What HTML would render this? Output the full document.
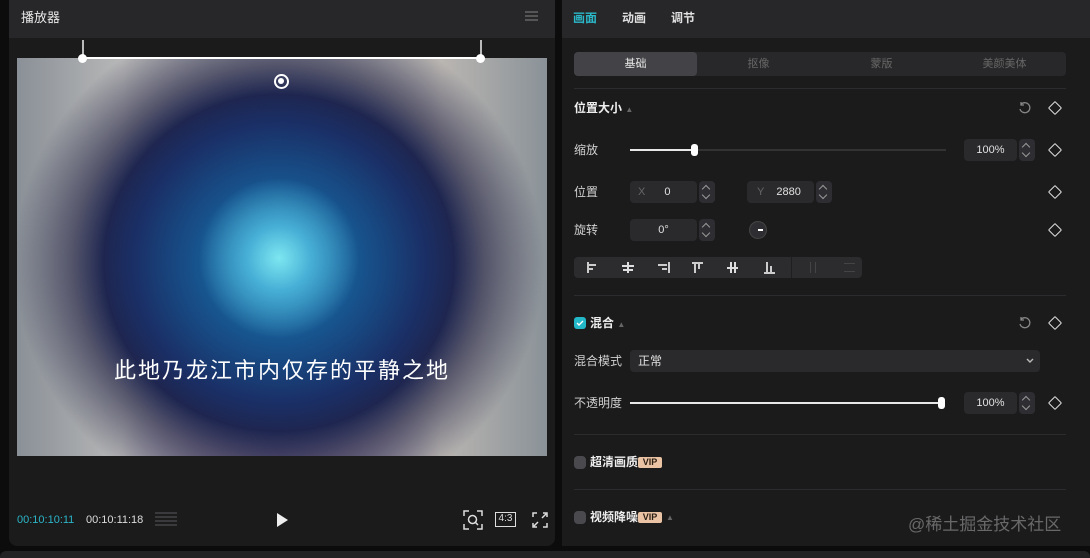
<!DOCTYPE html>
<html><head><meta charset="utf-8"><style>
*{margin:0;padding:0;box-sizing:border-box}
body{width:1090px;height:558px;background:#0c0c0d;position:relative;overflow:hidden;font-family:"Liberation Sans","Noto Sans CJK SC",sans-serif;color:#d8d8d8;font-size:12px;line-height:16px}
.a{position:absolute}
.panel{background:#1b1b1c}
.hdr{background:#27272a}
.lbl{font-size:12px;color:#d0d0d0}
.inp{background:#2a2a2d;border-radius:4px;color:#e0e0e0;font-size:11px}
.spin{background:#2e2e32;border-radius:4px}
.spin:before,.spin:after{content:"";position:absolute;left:4px;width:5px;height:5px;border-left:1.5px solid #999;border-top:1.5px solid #999}
.spin:before{top:5px;transform:rotate(45deg)}
.spin:after{bottom:5px;transform:rotate(225deg)}
.dia{width:10px;height:10px;border:1.5px solid #ddd;transform:rotate(45deg);border-radius:1px}
.sep{height:1px;background:#2c2c2f}
.vip{background:#e9c3a3;color:#2a1d12;font-size:9px;font-weight:bold;border-radius:2px;width:24px;height:11px;line-height:11px;text-align:center;font-family:"Liberation Sans",sans-serif}
.bar{background:#e8e8e8}
</style></head><body>
<div class="a panel" style="left:9px;top:0;width:546px;height:546px;border-radius:0 0 8px 8px"></div>
<div class="a hdr" style="left:9px;top:0;width:546px;height:38px"></div>
<div class="a" style="left:21px;top:10px;font-size:13px;color:#e8e8e8">播放器</div>
<div class="a" style="left:525px;top:11px;width:13px;height:1.5px;background:#555;box-shadow:0 4px 0 #555,0 8px 0 #555"></div>
<div class="a" style="left:17px;top:58px;width:530px;height:398px;overflow:hidden;background:
radial-gradient(ellipse 80px 80px at 262px 200px,#7de6f0 0%,rgba(80,190,225,.8) 40%,rgba(40,120,180,0) 100%),
radial-gradient(ellipse 265px 255px at 262px 205px,#2a86b8 0%,#17558f 30%,#1a2f66 55%,#1e2650 66%,rgba(50,50,80,.7) 78%,rgba(140,140,150,0) 100%),
radial-gradient(ellipse 160px 90px at 262px 395px,rgba(110,80,140,.7),rgba(110,80,140,0)),
linear-gradient(90deg,#8a9097 0%,#b8b8b8 20%,#a8abb0 50%,#bab6b2 80%,#8a9298 100%)">
<div class="a" style="left:0;width:530px;top:296px;line-height:30px;text-align:center;font-size:22px;color:#fff;letter-spacing:2px;font-family:'Noto Sans CJK SC',sans-serif">此地乃龙江市内仅存的平静之地</div>
<div class="a" style="left:257px;top:16px;width:15px;height:15px;border-radius:50%;border:2.5px solid #fff"><div class="a" style="left:2px;top:2px;width:6px;height:6px;border-radius:50%;background:#fff"></div></div>
</div>
<div class="a" style="left:82px;top:57px;width:398px;height:1.5px;background:#fff"></div>
<div class="a" style="left:82px;top:40px;width:1.5px;height:18px;background:#bbb"></div>
<div class="a" style="left:480px;top:40px;width:1.5px;height:18px;background:#bbb"></div>
<div class="a" style="left:78px;top:54px;width:9px;height:9px;border-radius:50%;background:#fff"></div>
<div class="a" style="left:476px;top:54px;width:9px;height:9px;border-radius:50%;background:#fff"></div>
<div class="a" style="left:17px;top:512px;font-size:11px;color:#2bb5c7">00:10:10:11</div>
<div class="a" style="left:86px;top:512px;font-size:11px;color:#ddd">00:10:11:18</div>
<div class="a" style="left:155px;top:512px;width:22px;height:16px;background:repeating-linear-gradient(#3a3a3c 0 2px,transparent 2px 4px)"></div>
<div class="a" style="left:277px;top:513px;width:0;height:0;border-left:11px solid #eee;border-top:7px solid transparent;border-bottom:7px solid transparent"></div>
<svg class="a" style="left:463px;top:510px" width="20" height="20" viewBox="0 0 20 20" fill="none" stroke="#ddd" stroke-width="1.5"><path d="M1 6V1h5M14 1h5v5M19 14v5h-5M6 19H1v-5"/><circle cx="9.5" cy="9.5" r="4"/><path d="M12.5 12.5l2.5 2.5"/></svg>
<div class="a" style="left:495px;top:512px;width:21px;height:15px;border:1.5px solid #ddd;font-size:10px;color:#ddd;text-align:center;line-height:12px">4:3</div>
<svg class="a" style="left:532px;top:512px" width="16" height="16" viewBox="0 0 16 16" fill="none" stroke="#ddd" stroke-width="1.5"><path d="M1 5V1h4M11 1h4v4M15 11v4h-4M5 15H1v-4M2 14l4-4M14 2l-4 4"/></svg>

<div class="a panel" style="left:562px;top:0;width:528px;height:546px"></div>
<div class="a hdr" style="left:562px;top:0;width:528px;height:38px"></div>
<div class="a" style="left:573px;top:10px;font-size:12px;color:#2bb8c8;font-weight:bold">画面</div>
<div class="a" style="left:622px;top:10px;font-size:12px;color:#e0e0e0;font-weight:bold">动画</div>
<div class="a" style="left:671px;top:10px;font-size:12px;color:#e0e0e0;font-weight:bold">调节</div>
<div class="a" style="left:574px;top:52px;width:492px;height:24px;background:#28282a;border-radius:4px"></div>
<div class="a" style="left:574px;top:52px;width:123px;height:24px;background:#434347;border-radius:4px;text-align:center;line-height:24px;color:#e6e6e6;font-size:11px">基础</div>
<div class="a" style="left:697px;top:52px;width:123px;line-height:24px;text-align:center;color:#666;font-size:11px">抠像</div>
<div class="a" style="left:820px;top:52px;width:123px;line-height:24px;text-align:center;color:#666;font-size:11px">蒙版</div>
<div class="a" style="left:943px;top:52px;width:123px;line-height:24px;text-align:center;color:#666;font-size:11px">美颜美体</div>
<div class="a sep" style="left:574px;top:88px;width:492px"></div>

<div class="a" style="left:574px;top:100px;font-size:12px;color:#eee;font-weight:bold">位置大小 <span style="color:#666;font-size:8px">▲</span></div>
<svg class="a" style="left:1018px;top:101px" width="14" height="14" viewBox="0 0 14 14" fill="none" stroke="#888" stroke-width="1.3"><path d="M3 3.5A5 5 0 1 1 2 8"/><path d="M3 1v3h3"/></svg>
<div class="a dia" style="left:1050px;top:103px"></div>

<div class="a lbl" style="left:574px;top:142px">缩放</div>
<div class="a" style="left:630px;top:149px;width:316px;height:2px;background:#333"></div>
<div class="a bar" style="left:630px;top:149px;width:65px;height:2px"></div>
<div class="a" style="left:691px;top:144px;width:7px;height:12px;border-radius:3px;background:#fff"></div>
<div class="a inp" style="left:964px;top:139px;width:53px;height:22px;text-align:center;line-height:22px">100%</div>
<div class="a spin" style="left:1019px;top:139px;width:16px;height:22px"></div>
<div class="a dia" style="left:1050px;top:145px"></div>

<div class="a lbl" style="left:574px;top:184px">位置</div>
<div class="a inp" style="left:630px;top:181px;width:67px;height:22px;line-height:22px"><span style="color:#666;margin-left:8px">X</span><span style="margin-left:19px">0</span></div>
<div class="a spin" style="left:699px;top:181px;width:16px;height:22px"></div>
<div class="a inp" style="left:747px;top:181px;width:67px;height:22px;line-height:22px"><span style="color:#666;margin-left:10px">Y</span><span style="margin-left:12px">2880</span></div>
<div class="a spin" style="left:816px;top:181px;width:16px;height:22px"></div>
<div class="a dia" style="left:1050px;top:187px"></div>

<div class="a lbl" style="left:574px;top:222px">旋转</div>
<div class="a inp" style="left:630px;top:219px;width:67px;height:22px;line-height:22px;text-align:center">0°</div>
<div class="a spin" style="left:699px;top:219px;width:16px;height:22px"></div>
<div class="a" style="left:749px;top:221px;width:18px;height:18px;border-radius:50%;background:#2e2e32;border:1px solid #444"><div class="a" style="left:8px;top:7px;width:5px;height:2px;background:#fff"></div></div>
<div class="a dia" style="left:1050px;top:225px"></div>

<div class="a" style="left:574px;top:257px;width:288px;height:21px;background:#2c2c2f;border-radius:4px"></div>
<div class="a" style="left:791px;top:257px;width:1px;height:21px;background:#1f1f21"></div>
<div class="a" style="left:587px;top:262px;width:1.5px;height:11px;background:#ccc"></div><div class="a" style="left:589px;top:264px;width:7px;height:1.5px;background:#ccc"></div><div class="a" style="left:589px;top:268px;width:4px;height:1.5px;background:#ccc"></div>
<div class="a" style="left:627px;top:262px;width:1.5px;height:11px;background:#ddd"></div><div class="a" style="left:622px;top:265px;width:12px;height:1.5px;background:#ddd"></div><div class="a" style="left:623px;top:269px;width:10px;height:1.5px;background:#ddd"></div>
<div class="a" style="left:668px;top:262px;width:1.5px;height:11px;background:#ccc"></div><div class="a" style="left:658px;top:264px;width:9px;height:1.5px;background:#ccc"></div><div class="a" style="left:662px;top:268px;width:5px;height:1.5px;background:#ccc"></div>
<div class="a" style="left:692px;top:262px;width:11px;height:1.5px;background:#ccc"></div><div class="a" style="left:694px;top:264px;width:1.5px;height:9px;background:#ccc"></div><div class="a" style="left:698px;top:264px;width:1.5px;height:5px;background:#ccc"></div>
<div class="a" style="left:727px;top:267px;width:11px;height:1.5px;background:#ddd"></div><div class="a" style="left:730px;top:262px;width:1.5px;height:11px;background:#ddd"></div><div class="a" style="left:734px;top:262px;width:1.5px;height:11px;background:#ddd"></div>
<div class="a" style="left:764px;top:272px;width:11px;height:1.5px;background:#ccc"></div><div class="a" style="left:766px;top:262px;width:1.5px;height:10px;background:#ccc"></div><div class="a" style="left:770px;top:266px;width:1.5px;height:6px;background:#ccc"></div>
<div class="a" style="left:810px;top:262px;width:6px;height:11px;border-left:1.5px solid #444;border-right:1.5px solid #444"></div>
<div class="a" style="left:844px;top:263px;width:11px;height:9px;border-top:1.5px solid #444;border-bottom:1.5px solid #444"></div>
<div class="a sep" style="left:574px;top:295px;width:492px"></div>

<div class="a" style="left:574px;top:317px;width:12px;height:12px;border-radius:3px;background:#22b8c8"><svg class="a" style="left:2px;top:2px" width="8" height="8" viewBox="0 0 8 8" fill="none" stroke="#fff" stroke-width="1.4"><path d="M1 4l2 2 4-4"/></svg></div>
<div class="a" style="left:590px;top:315px;font-size:12px;color:#eee;font-weight:bold">混合 <span style="color:#666;font-size:8px">▲</span></div>
<svg class="a" style="left:1018px;top:316px" width="14" height="14" viewBox="0 0 14 14" fill="none" stroke="#888" stroke-width="1.3"><path d="M3 3.5A5 5 0 1 1 2 8"/><path d="M3 1v3h3"/></svg>
<div class="a dia" style="left:1050px;top:318px"></div>

<div class="a lbl" style="left:574px;top:353px">混合模式</div>
<div class="a inp" style="left:630px;top:350px;width:410px;height:22px;line-height:22px;padding-left:8px;font-size:12px">正常</div>
<svg class="a" style="left:1026px;top:358px" width="8" height="6" viewBox="0 0 8 6" fill="none" stroke="#bbb" stroke-width="1.4"><path d="M1 1l3 3 3-3"/></svg>

<div class="a lbl" style="left:574px;top:395px">不透明度</div>
<div class="a bar" style="left:630px;top:402px;width:312px;height:2px"></div>
<div class="a" style="left:938px;top:397px;width:7px;height:12px;border-radius:3px;background:#fff"></div>
<div class="a inp" style="left:964px;top:392px;width:53px;height:22px;text-align:center;line-height:22px">100%</div>
<div class="a spin" style="left:1019px;top:392px;width:16px;height:22px"></div>
<div class="a dia" style="left:1050px;top:398px"></div>
<div class="a sep" style="left:574px;top:434px;width:492px"></div>

<div class="a" style="left:574px;top:456px;width:12px;height:13px;border-radius:4px;background:#4a4a4e"></div>
<div class="a" style="left:590px;top:454px;font-size:12px;color:#eee;font-weight:bold">超清画质</div>
<div class="a vip" style="left:638px;top:457px">VIP</div>
<div class="a sep" style="left:574px;top:489px;width:492px"></div>

<div class="a" style="left:574px;top:511px;width:12px;height:13px;border-radius:4px;background:#4a4a4e"></div>
<div class="a" style="left:590px;top:509px;font-size:12px;color:#eee;font-weight:bold">视频降噪</div>
<div class="a vip" style="left:638px;top:512px">VIP</div>
<div class="a" style="left:666px;top:510px;color:#666;font-size:8px">▲</div>
<div class="a" style="left:908px;top:514px;line-height:22px;font-size:17px;color:rgba(200,200,200,.45)">@稀土掘金技术社区</div>

<div class="a" style="left:0;top:551px;width:1090px;height:7px;background:#232326;border-radius:6px 6px 0 0"></div>
</body></html>
